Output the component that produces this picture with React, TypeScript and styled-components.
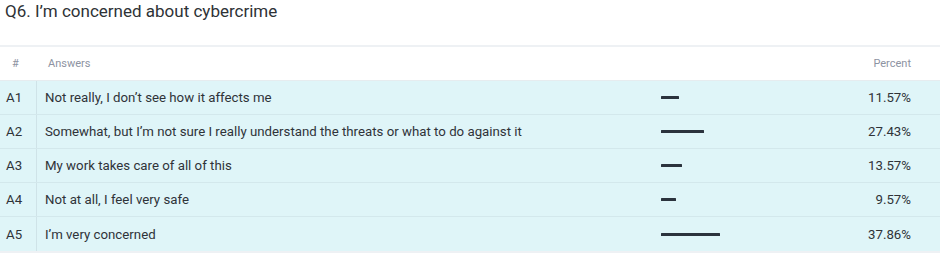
import React from "react";
import styled, { createGlobalStyle } from "styled-components";

const Global = createGlobalStyle`
  html, body { margin: 0; padding: 0; background: #ffffff; }
  body { font-family: Roboto, "Noto Sans", Arial, sans-serif; color: #2f3338; }
`;

const Page = styled.div`
  width: 940px;
  height: 258px;
  overflow: hidden;
`;

const Title = styled.h2`
  margin: 0;
  padding: 1px 0 0 5px;
  height: 45px;
  box-sizing: border-box;
  font-size: 17px;
  font-weight: 400;
  color: #2e3236;
  letter-spacing: 0;
`;

const Table = styled.div`
  border-top: 2px solid #eef1f4;
  border-bottom: 2px solid #eef1f4;
`;

const Row = styled.div<{ $head?: boolean }>`
  display: grid;
  grid-template-columns: 37px 1fr 170px 80px;
  padding-right: 29px;
  height: 34px;
  align-items: stretch;
  background: ${(p) => (p.$head ? "#ffffff" : "#dff5f8")};
  border-bottom: 1px solid ${(p) => (p.$head ? "#e6ecef" : "#d3e8ec")};
  box-sizing: border-box;
  &:last-child { border-bottom: none; }
`;

const Cell = styled.div<{ $head?: boolean; $divider?: boolean; $right?: boolean; $pad?: number }>`
  display: flex;
  align-items: center;
  justify-content: ${(p) => (p.$right ? "flex-end" : "flex-start")};
  padding-left: ${(p) => p.$pad ?? 0}px;
  font-size: ${(p) => (p.$head ? "11px" : "13.25px")};
  color: ${(p) => (p.$head ? "#8d93a2" : "#2f3338")};
  border-right: ${(p) => (p.$divider ? "1px solid #cfe3e8" : "none")};
  white-space: nowrap;
`;

const BarTrack = styled.div`
  display: flex;
  align-items: center;
`;

const Bar = styled.div`
  height: 3px;
  background: #2b333d;
  border-radius: 0.5px;
`;

const data = [
  { id: "A1", text: "Not really, I don\u2019t see how it affects me", pct: 11.57 },
  { id: "A2", text: "Somewhat, but I\u2019m not sure I really understand the threats or what to do against it", pct: 27.43 },
  { id: "A3", text: "My work takes care of all of this", pct: 13.57 },
  { id: "A4", text: "Not at all, I feel very safe", pct: 9.57 },
  { id: "A5", text: "I\u2019m very concerned", pct: 37.86 },
];

export default function App() {
  return (
    <Page>
      <Global />
      <Title>Q6. I’m concerned about cybercrime</Title>
      <Table>
        <Row $head>
          <Cell $head $pad={12}>#</Cell>
          <Cell $head $pad={11}>Answers</Cell>
          <Cell $head />
          <Cell $head $right>Percent</Cell>
        </Row>
        {data.map((d) => (
          <Row key={d.id}>
            <Cell $pad={6} $divider>{d.id}</Cell>
            <Cell $pad={8}>{d.text}</Cell>
            <BarTrack>
              <Bar style={{ width: `${Math.round(d.pct * 1.56)}px` }} />
            </BarTrack>
            <Cell $right>{d.pct.toFixed(2)}%</Cell>
          </Row>
        ))}
      </Table>
    </Page>
  );
}
